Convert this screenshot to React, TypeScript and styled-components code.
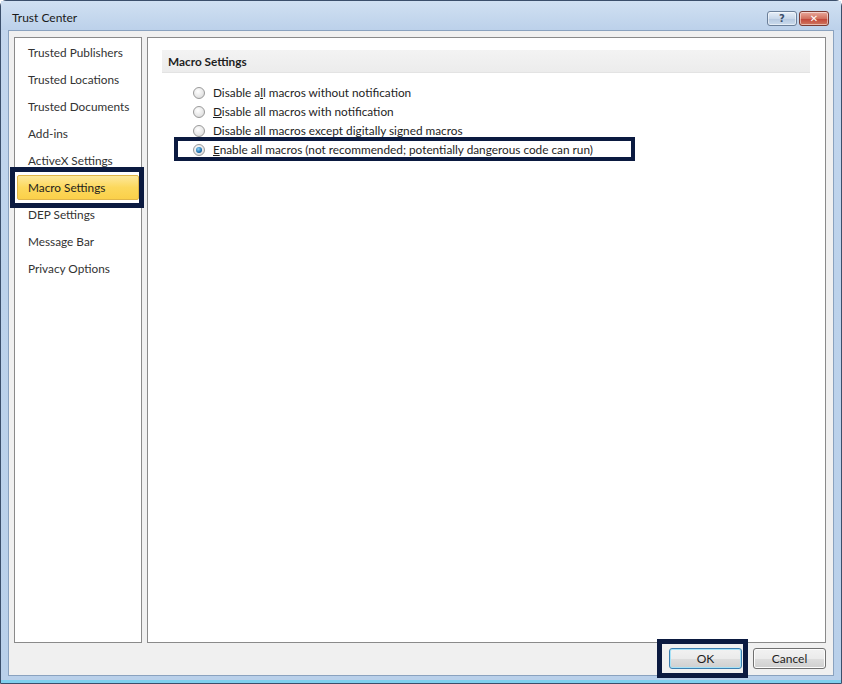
import React from "react";
import styled, { createGlobalStyle, css } from "styled-components";

const Global = createGlobalStyle`
  html, body { margin: 0; padding: 0; background: #ffffff; }
  body { font-family: "Lato", "DejaVu Sans", sans-serif; font-size: 11.8px; }
  * { box-sizing: border-box; }
`;

const Window = styled.div`
  width: 842px;
  height: 684px;
  display: flex;
  flex-direction: column;
  background: linear-gradient(180deg, #c4d7ee 0%, #bcd2eb 40%, #b9d0ea 100%);
  border: 1px solid #3b4f6b;
  border-radius: 6px 6px 0 0;
  padding: 0 7px 7px 7px;
  box-shadow: inset 0 -3px 0 #7fd0ee;
`;

const TitleBar = styled.div`
  height: 29px;
  display: flex;
  align-items: center;
  justify-content: space-between;
  background: linear-gradient(180deg, #d0e0f2 0%, #bcd1ea 100%);
  margin: 0 -7px;
  padding-left: 11px;
  padding-right: 12px;
`;

const Title = styled.div`
  font-family: "Lato", "DejaVu Sans", sans-serif;
  font-size: 12px;
  color: #1a1a1a;
  padding-top: 3px;
`;

const Caps = styled.div`
  display: flex;
  gap: 2px;
  align-self: flex-start;
  margin-top: 10px;
`;

const CapButton = styled.div<{ $close?: boolean }>`
  width: 30px;
  height: 15px;
  border: 1px solid ${(p) => (p.$close ? "#7a3a32" : "#6b7f99")};
  border-radius: 3px;
  display: flex;
  align-items: center;
  justify-content: center;
  font-family: "DejaVu Sans", sans-serif;
  font-size: 10px;
  font-weight: bold;
  color: ${(p) => (p.$close ? "#ffffff" : "#3c4f6b")};
  background: ${(p) =>
    p.$close
      ? "linear-gradient(180deg, #e9a99c 0%, #d2715f 50%, #c2473a 55%, #d0775f 100%)"
      : "linear-gradient(180deg, #e6eef8 0%, #c9d8ea 50%, #b7c9e0 55%, #cbdcee 100%)"};
  box-shadow: inset 0 0 0 1px rgba(255, 255, 255, 0.5);
`;

const Body = styled.div`
  flex: 1;
  background: #f0f0f0;
  border: 1px solid #8aa2bf;
  display: flex;
  flex-direction: column;
  padding: 6px 7px 6px 5px;
`;

const Panels = styled.div`
  flex: 1;
  display: grid;
  grid-template-columns: 128px 1fr;
  gap: 5px;
`;

const Panel = styled.div`
  background: #ffffff;
  border: 1px solid #8a8a8a;
  position: relative;
`;

const NavList = styled.div`
  display: flex;
  flex-direction: column;
  padding: 1px 2px 0 2px;
`;

const NavItem = styled.div<{ $selected?: boolean }>`
  position: relative;
  height: 25px;
  margin: 1px 0;
  padding-left: 10px;
  display: flex;
  align-items: center;
  color: #333333;
  border: 1px solid transparent;
  border-radius: 2px;
  ${(p) =>
    p.$selected &&
    css`
      background: linear-gradient(180deg, #fde89b 0%, #fcd85c 50%, #fbd04a 100%);
      border-color: #e0b548;
      color: #1e1e1e;
    `}
`;

const Highlight = styled.div<{ $t: number; $r: number; $b: number; $l: number; $w: number }>`
  position: absolute;
  top: ${(p) => -p.$t}px;
  right: ${(p) => -p.$r}px;
  bottom: ${(p) => -p.$b}px;
  left: ${(p) => -p.$l}px;
  border: ${(p) => p.$w}px solid #0b1a40;
  pointer-events: none;
`;

const Content = styled.div`
  padding: 12px 15px 0 14px;
  display: flex;
  flex-direction: column;
`;

const SectionHeader = styled.div`
  height: 23px;
  background: linear-gradient(180deg, #f3f3f3 0%, #ececec 100%);
  border-bottom: 1px solid #e3e3e3;
  display: flex;
  align-items: center;
  padding-left: 6px;
  font-weight: bold;
  color: #1e1e1e;
`;

const Options = styled.div`
  display: flex;
  flex-direction: column;
  padding: 10px 0 0 31px;
`;

const OptionRow = styled.label`
  position: relative;
  height: 19px;
  display: flex;
  align-items: center;
  gap: 8px;
  color: #1e1e1e;
  align-self: flex-start;
  padding-right: 42px;
`;

const Radio = styled.span<{ $checked?: boolean }>`
  width: 12px;
  height: 12px;
  border-radius: 50%;
  border: 1px solid #9a9a9a;
  background: radial-gradient(circle at 40% 35%, #ffffff 0%, #e6e6e6 60%, #cfcfcf 100%);
  display: flex;
  align-items: center;
  justify-content: center;
  flex: none;
  &::after {
    content: "";
    display: ${(p) => (p.$checked ? "block" : "none")};
    width: 6px;
    height: 6px;
    border-radius: 50%;
    background: radial-gradient(circle at 40% 35%, #8fd3f7 0%, #1b6fae 60%, #0c3f73 100%);
  }
`;

const U = styled.span`
  text-decoration: underline;
`;

const Footer = styled.div`
  height: 26px;
  display: flex;
  justify-content: flex-end;
  align-items: flex-end;
  gap: 11px;
`;

const Button = styled.button<{ $default?: boolean }>`
  position: relative;
  width: 73px;
  height: 21px;
  font-family: "Lato", "DejaVu Sans", sans-serif;
  font-size: 12px;
  color: #1e1e1e;
  border-radius: 3px;
  border: 1px solid ${(p) => (p.$default ? "#3c7fb1" : "#707070")};
  background: linear-gradient(180deg, #f2f2f2 0%, #ebebeb 50%, #dddddd 51%, #cfcfcf 100%);
  box-shadow: ${(p) => (p.$default ? "inset 0 0 0 1px #a6e2f7" : "inset 0 0 0 1px #fcfcfc")};
  padding: 0;
`;

const nav = [
  "Trusted Publishers",
  "Trusted Locations",
  "Trusted Documents",
  "Add-ins",
  "ActiveX Settings",
  "Macro Settings",
  "DEP Settings",
  "Message Bar",
  "Privacy Options",
];

export default function App() {
  return (
    <>
      <Global />
      <Window>
        <TitleBar>
          <Title>Trust Center</Title>
          <Caps>
            <CapButton>?</CapButton>
            <CapButton $close>✕</CapButton>
          </Caps>
        </TitleBar>
        <Body>
          <Panels>
            <Panel>
              <NavList>
                {nav.map((n) => (
                  <NavItem key={n} $selected={n === "Macro Settings"}>
                    {n}
                    {n === "Macro Settings" && <Highlight $t={9} $r={6} $b={9} $l={8} $w={5} />}
                  </NavItem>
                ))}
              </NavList>
            </Panel>
            <Panel>
              <Content>
                <SectionHeader>Macro Settings</SectionHeader>
                <Options>
                  <OptionRow>
                    <Radio />
                    <span>
                      Disable a<U>l</U>l macros without notification
                    </span>
                  </OptionRow>
                  <OptionRow>
                    <Radio />
                    <span>
                      <U>D</U>isable all macros with notification
                    </span>
                  </OptionRow>
                  <OptionRow>
                    <Radio />
                    <span>
                      Disable all macros except di<U>g</U>itally signed macros
                    </span>
                  </OptionRow>
                  <OptionRow>
                    <Radio $checked />
                    <span>
                      <U>E</U>nable all macros (not recommended; potentially dangerous code can run)
                    </span>
                    <Highlight $t={3} $r={0} $b={2} $l={19} $w={4} />
                  </OptionRow>
                </Options>
              </Content>
            </Panel>
          </Panels>
          <Footer>
            <Button $default>
              OK
              <Highlight $t={10} $r={7} $b={10} $l={13} $w={5} />
            </Button>
            <Button>Cancel</Button>
          </Footer>
        </Body>
      </Window>
    </>
  );
}
